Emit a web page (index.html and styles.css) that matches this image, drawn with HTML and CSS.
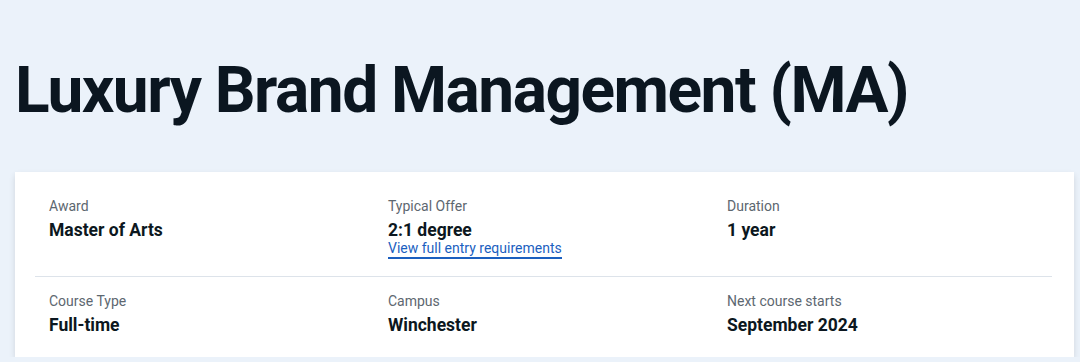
FILE: index.html
```html
<!DOCTYPE html>
<html>
<head>
  <title>Luxury Brand Management (MA)</title>
  <link rel="stylesheet" href="styles.css">
</head>
<body>

  <h1 class="course-title">Luxury Brand Management (MA)</h1>

  <div class="key-info">
    <div class="info-row first">
      <div class="info-item">
        <span class="info-label">Award</span>
        <span class="info-value">Master of Arts</span>
      </div>
      <div class="info-item">
        <span class="info-label">Typical Offer</span>
        <span class="info-value">2:1 degree</span>
        <a class="info-link" href="#entry">View full entry requirements</a>
      </div>
      <div class="info-item">
        <span class="info-label">Duration</span>
        <span class="info-value">1 year</span>
      </div>
    </div>
    <div class="info-row last">
      <div class="info-item">
        <span class="info-label">Course Type</span>
        <span class="info-value">Full-time</span>
      </div>
      <div class="info-item">
        <span class="info-label">Campus</span>
        <span class="info-value">Winchester</span>
      </div>
      <div class="info-item">
        <span class="info-label">Next course starts</span>
        <span class="info-value">September 2024</span>
      </div>
    </div>
  </div>

</body>
</html>
```

FILE: styles.css
```css
body {
  font-family: Roboto, Arial, sans-serif;
  background-color: #ebf2fa;
  color: #0c1720;
  margin: 0;
  padding: 51px 6px 0 15px;
}
.course-title {
  margin: 0 0 41px 0;
  font-size: 64px;
  font-weight: 700;
  line-height: 80px;
  letter-spacing: -1.5px;
  color: #0b1620;
}
.key-info {
  background-color: #fff;
  box-shadow: 0 3px 6px rgba(0, 0, 0, 0.12);
  padding: 0 22px 0 20px;
}
.info-row {
  display: grid;
  grid-template-columns: repeat(3, 1fr);
}
.info-row.first {
  padding: 24px 0 17px;
  border-bottom: 1px solid #dde3ea;
}
.info-row.last {
  padding: 14px 0 20px;
}
.info-item {
  display: flex;
  flex-direction: column;
  align-items: flex-start;
  padding-left: 14px;
}
.info-label {
  font-size: 14px;
  line-height: 20px;
  color: #5d6770;
}
.info-value {
  margin-top: 2px;
  font-size: 17.5px;
  font-weight: 700;
  line-height: 24px;
  color: #0c1720;
}
.info-link {
  margin-top: -3px;
  font-size: 14px;
  line-height: 18px;
  color: #1b5fbf;
  text-decoration: none;
  border-bottom: 2px solid #1b5fbf;
}
```
